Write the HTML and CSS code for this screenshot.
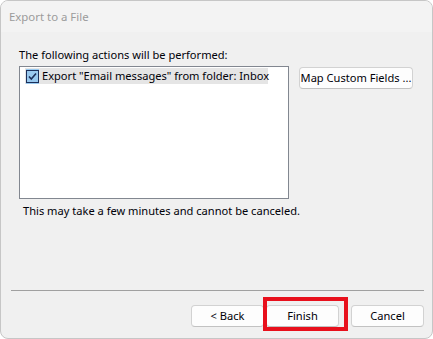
FILE: index.html
```html
<!doctype html>
<html lang="en">
  <head>
    <meta charset="UTF-8" />
    <meta name="viewport" content="width=device-width, initial-scale=1.0" />
    <title>Export to a File</title>
    <link rel="stylesheet" href="styles.css">
  </head>
  <body>
    <div class="window">
      <div class="titlebar">Export to a File</div>

      <div class="content">
        <div class="label">The following actions will be performed:</div>
        <div class="row">
          <div class="listbox">
            <div class="item">
              <span class="check">
                <span class="box">
                  <svg width="11" height="11" viewBox="0 0 11 11">
                    <path d="M2 5.5 L4.3 8 L9 2.5" fill="none" stroke="#1c2f5a" stroke-width="1.6" />
                  </svg>
                </span>
              </span>
              <span class="item-text">Export "Email messages" from folder: Inbox</span>
            </div>
          </div>
          <button class="btn btn-map">Map Custom Fields ...</button>
        </div>
        <div class="note">This may take a few minutes and cannot be canceled.</div>
      </div>

      <div class="footer">
        <div class="separator"></div>
        <div class="buttons">
          <button class="btn">&lt; Back</button>
          <button class="btn btn-finish">Finish<span class="highlight"></span></button>
          <button class="btn btn-cancel">Cancel</button>
        </div>
      </div>
    </div>
  </body>
</html>
```

FILE: styles.css
```css
html,
body {
  margin: 0;
  background: #ffffff;
}
body {
  font-family: "Noto Sans", "Open Sans", sans-serif;
  font-size: 11.1px;
  color: #000008;
}
.window {
  box-sizing: border-box;
  width: 433px;
  height: 339px;
  border: 1px solid #c6c6c6;
  border-radius: 8px;
  background: #f0f0f0;
  display: flex;
  flex-direction: column;
  overflow: hidden;
}
.titlebar {
  height: 31px;
  flex: none;
  display: flex;
  align-items: center;
  padding-left: 8px;
  background: #f3f3f3;
  color: #9b9b9b;
  font-size: 11.4px;
}
.content {
  flex: 1;
  padding: 15px 0 0 18px;
}
.label {
  line-height: 16px;
  margin-bottom: 3px;
}
.row {
  display: flex;
  align-items: flex-start;
  gap: 10px;
}
.listbox {
  box-sizing: border-box;
  width: 270px;
  height: 133px;
  background: #ffffff;
  border: 1px solid #828790;
  padding: 1px 0 0 5px;
}
.item {
  display: flex;
  align-items: center;
  width: 243px;
  height: 16px;
  background: #e5e5e5;
}
.check {
  width: 15px;
  height: 15px;
  margin-left: 1px;
  background: #99c9ef;
  display: flex;
  align-items: center;
  justify-content: center;
}
.box {
  box-sizing: border-box;
  width: 13px;
  height: 13px;
  border: 1px solid #1c2f5a;
  display: flex;
  align-items: center;
  justify-content: center;
}
.item-text {
  margin-left: 3px;
  white-space: nowrap;
  line-height: 16px;
}
.btn {
  box-sizing: border-box;
  font-family: inherit;
  font-size: 11.1px;
  color: #000008;
  background: #fdfdfd;
  border: 1px solid #d2d2d2;
  border-bottom-color: #c2c2c2;
  border-radius: 4px;
  height: 22px;
  padding: 0;
  line-height: 18px;
  white-space: nowrap;
}
.btn-map {
  width: 114px;
  margin-top: 1px;
}
.note {
  margin: 4px 0 0 4px;
  line-height: 16px;
}
.footer {
  flex: none;
  padding: 0 8px 11px 10px;
}
.separator {
  height: 1px;
  background: #a0a0a0;
}
.buttons {
  display: flex;
  justify-content: flex-end;
  margin-top: 14px;
}
.buttons .btn {
  width: 73px;
}
.btn-finish {
  position: relative;
  margin-left: 2px;
}
.btn-cancel {
  margin-left: 12px;
}
.highlight {
  position: absolute;
  left: -4px;
  top: -9px;
  width: 85px;
  height: 34px;
  box-sizing: border-box;
  border: 4px solid #e8101c;
}
```
